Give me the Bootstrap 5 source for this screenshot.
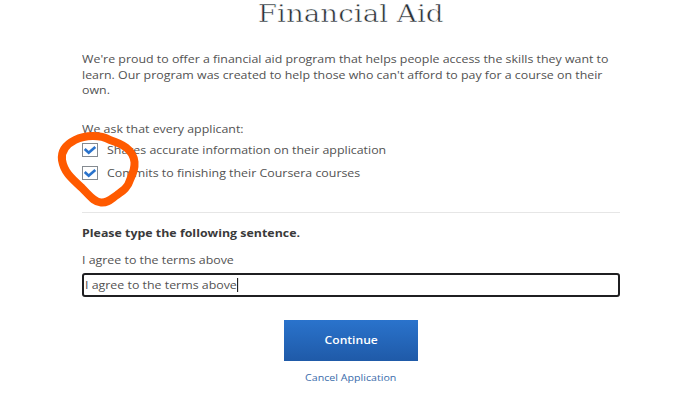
<!DOCTYPE html>
<html lang="en">
<head>
<meta charset="utf-8">
<meta name="viewport" content="width=device-width, initial-scale=1">
<title>Financial Aid</title>
<link href="https://cdn.jsdelivr.net/npm/bootstrap@5.3.0/dist/css/bootstrap.min.css" rel="stylesheet">
<style>
body{font-family:"Open Sans",sans-serif;font-size:11px;line-height:15.5px;color:#525252;background:#fff;height:400px;overflow:hidden}
.aid-form{width:538px;margin-left:82px;height:400px}
.wide{display:inline-block;white-space:nowrap;transform:scaleX(1.126);transform-origin:0 50%}
.wide-center{display:inline-block;white-space:nowrap;transform:scaleX(1.13)}
.aid-title{font-family:"DejaVu Serif",serif;font-size:25px;line-height:28px;color:#2c3338;-webkit-text-stroke:.55px #fff;margin:0 0 23px;height:28px;font-weight:400}
.aid-title .wide-center{transform:scaleX(1.11)}
.intro{height:47px;margin-bottom:23px}
.ask{height:16px;margin-bottom:1px}
.pledge{height:23px}
.tick{width:16px;height:14px;margin-right:9px}
.rule{height:1px;background:#e6e6e6;margin:28px 0 12px}
.prompt-line{height:16px;margin-bottom:11px;color:#3a3a3a}
.sample{height:16px;margin-bottom:5px}
.typed{height:24px;border:2px solid #1f1f21;border-radius:3px;padding-left:1px;width:538px}
.caret{width:1px;height:14px;background:#222}
.go{width:134px;height:41px;margin-top:23px;border:0;border-radius:0;background:linear-gradient(#2a73cc,#1f5aa8);color:#fff;font-size:11px}
.go:hover{color:#fff}
.go .wide-center{transform:scaleX(1.1)}
.cancel{font-size:9.5px;color:#3a6cab;height:14px;line-height:14px;margin-top:10px}
.cancel .wide-center{transform:scaleX(1.12)}
.loop{left:50px;top:125px;width:100px;height:90px}
</style>
<script src="https://cdn.jsdelivr.net/npm/bootstrap@5.3.0/dist/js/bootstrap.bundle.min.js"></script>
</head>
<body class="position-relative">
<main class="aid-form d-flex flex-column">
  <h1 class="aid-title text-center"><span class="wide-center">Financial Aid</span></h1>
  <p class="intro"><span class="wide">We're proud to offer a financial aid program that helps people access the skills they want to<br>learn. Our program was created to help those who can't afford to pay for a course on their<br>own.</span></p>
  <div class="ask"><span class="wide">We ask that every applicant:</span></div>
  <div class="pledge d-flex align-items-center">
    <svg class="tick" viewBox="0 0 16 14"><rect x=".5" y=".5" width="15" height="13" fill="#fff" stroke="#858b91"/><path d="M2.7 6 6.7 9.8 13.3 4" fill="none" stroke="#2a73cc" stroke-width="2.6"/></svg>
    <span class="wide">Shares accurate information on their application</span>
  </div>
  <div class="pledge d-flex align-items-center">
    <svg class="tick" viewBox="0 0 16 14"><rect x=".5" y=".5" width="15" height="13" fill="#fff" stroke="#858b91"/><path d="M2.7 6 6.7 9.8 13.3 4" fill="none" stroke="#2a73cc" stroke-width="2.6"/></svg>
    <span class="wide">Commits to finishing their Coursera courses</span>
  </div>
  <div class="rule"></div>
  <div class="prompt-line fw-bold"><span class="wide">Please type the following sentence.</span></div>
  <div class="sample"><span class="wide">I agree to the terms above</span></div>
  <div class="typed d-flex align-items-center"><span class="wide d-flex align-items-center">I agree to the terms above<i class="caret"></i></span></div>
  <button class="go btn fw-semibold align-self-center p-0" type="button"><span class="wide-center">Continue</span></button>
  <a class="cancel text-decoration-none align-self-center" href="#"><span class="wide-center">Cancel Application</span></a>
</main>
<svg class="loop position-absolute" viewBox="50 125 100 90"><path d="M75 140C65 145 61 152 62 160C64 172 71 178 82 188C90 196 94 202 101 202.500C108 203 111 199 117 195C124 190 128 187 130 180C133 173 135 169 134.500 162C133 149 122 144 110 140C100 134.500 85 135 75 140Z" fill="none" stroke="#ff5a00" stroke-width="8" stroke-linejoin="round"/></svg>
</body>
</html>
